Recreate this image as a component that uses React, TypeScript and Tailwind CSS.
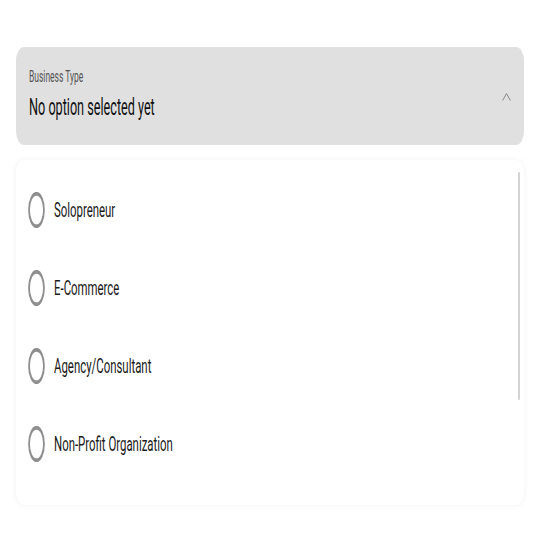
import React from "react";

const options = ["Solopreneur", "E-Commerce", "Agency/Consultant", "Non-Profit Organization"];

function Squish({ children, className }: { children: React.ReactNode; className?: string }) {
  return (
    <span className={"inline-block origin-left whitespace-nowrap " + (className ?? "")}>
      {children}
    </span>
  );
}

export default function App() {
  return (
    <div className="w-[542px] h-[542px] bg-white overflow-hidden pt-[47px] pl-[16px] pr-[18px]" style={{ fontFamily: "Roboto, 'Noto Sans', sans-serif" }}>
      <div className="h-[98px] rounded-[8px/14px] bg-[#e0e0e0] flex items-center pl-[13px] pr-[13px]">
        <div className="flex-1 flex flex-col">
          <Squish className="scale-x-[0.53] text-[16px] leading-[18px] text-[#555555] mt-[-2px]">Business Type</Squish>
          <Squish className="scale-x-[0.55] text-[23px] leading-[28px] text-[#111111] mt-[8px]">No option selected yet</Squish>
        </div>
        <svg width="9" height="8" viewBox="0 0 9 8" className="mt-[2px]">
          <path d="M0.6 7.5 L4.5 0.6 L8.4 7.5" fill="none" stroke="#888888" strokeWidth="1" />
        </svg>
      </div>
      <div className="mt-[15px] h-[345px] rounded-[8px/14px] bg-white shadow-[0_0_6px_rgba(0,0,0,0.06)] relative pt-[11px]">
        <div className="absolute right-[4px] top-[12px] h-[228px] w-[2px] bg-[#d4d4d4] rounded-full" />
        <div className="flex flex-col">
          {options.map((o) => (
            <div key={o} className="h-[78px] flex items-center pl-[12px]">
              <svg width="17" height="36" viewBox="0 0 36 36" preserveAspectRatio="none" className="shrink-0">
                <ellipse cx="18" cy="18" rx="15.8" ry="16.2" fill="none" stroke="#8f8f8f" strokeWidth="3.8" />
              </svg>
              <Squish className="scale-x-[0.57] ml-[9px] text-[20px] leading-[26px] text-[#1a1a1a]">{o}</Squish>
            </div>
          ))}
        </div>
      </div>
    </div>
  );
}
